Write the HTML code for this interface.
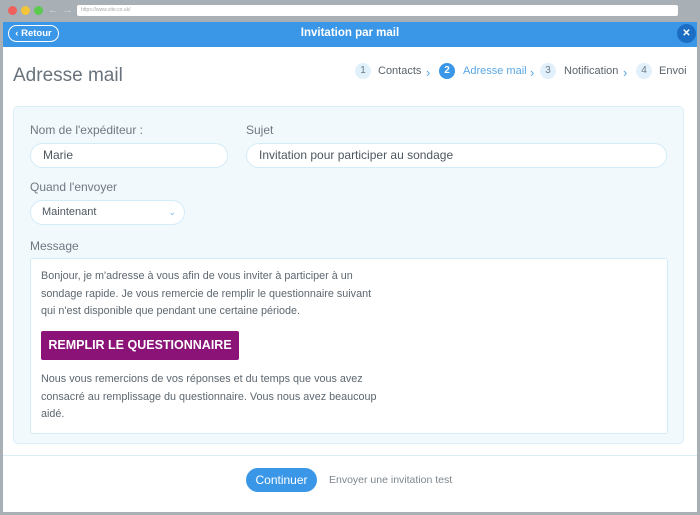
<!DOCTYPE html><html><head><meta charset="utf-8"><style>
*{margin:0;padding:0;box-sizing:border-box}
body{width:700px;height:515px;background:#a8afb5;font-family:"Liberation Sans",Arial,sans-serif;position:relative;overflow:hidden}
.a{position:absolute}
.dot{width:9px;height:9px;border-radius:50%;top:6px}
.win{left:3px;top:22px;width:694px;height:490px;background:#fff}
.hdr{left:3px;top:22px;width:694px;height:25px;background:#3a97e8}
.lbl{font-size:12px;color:#6f7880}
.inp{background:#fff;border:1px solid #d4ecf7;border-radius:13px;font-size:12px;color:#4d5760;padding-left:12px;line-height:23px}
.circ{width:16px;height:16px;border-radius:50%;background:#e0f1fb;color:#6d7780;font-size:10px;text-align:center;line-height:16px;top:63px}
.st{font-size:11px;color:#5a636b;top:65px}
.ch{font-size:13px;color:#5aa8e6;top:65px}
.msg{font-size:10.8px;color:#5d6770;line-height:17.5px;white-space:nowrap}
</style></head><body>
<div class="a dot" style="left:8px;background:#f0615d"></div>
<div class="a dot" style="left:21px;background:#f4c538"></div>
<div class="a dot" style="left:34px;background:#5cc94f"></div>
<div class="a" style="left:48px;top:4px;color:#d0d5d9;font-size:11px">&#8592; &#8594;</div>
<div class="a" style="left:77px;top:5px;width:601px;height:11px;background:#fff;border-radius:2px;font-size:5px;color:#aaa;padding-left:4px;line-height:11px">https://www.site.co.uk/</div>
<div class="a win"></div>
<div class="a hdr"></div>
<div class="a" style="left:8px;top:25px;width:51px;height:17px;border:1px solid #fff;border-radius:9px;color:#fff;font-size:9.5px;font-weight:bold;line-height:15px;text-align:center">&#8249; Retour</div>
<div class="a" style="left:0;width:700px;top:27px;text-align:center;color:#fff;font-size:11.5px;font-weight:bold">Invitation par mail</div>
<div class="a" style="left:677px;top:24px;width:19px;height:19px;border-radius:50%;background:#1c6ec4;color:#fff;font-size:10px;font-weight:bold;text-align:center;line-height:19px">✕</div>
<div class="a" style="left:13px;top:65px;font-size:19px;color:#69737c">Adresse mail</div>
<div class="a circ" style="left:355px">1</div><div class="a st" style="left:378px">Contacts</div><div class="a ch" style="left:426px">›</div>
<div class="a circ" style="left:439px;background:#3a97e8;color:#fff;font-weight:bold">2</div><div class="a st" style="left:463px;color:#5aa8e6">Adresse mail</div><div class="a ch" style="left:530px">›</div>
<div class="a circ" style="left:540px">3</div><div class="a st" style="left:564px">Notification</div><div class="a ch" style="left:623px">›</div>
<div class="a circ" style="left:636px">4</div><div class="a st" style="left:659px">Envoi</div>
<div class="a" style="left:13px;top:106px;width:671px;height:338px;background:#f1f9fd;border:1px solid #dbeff8;border-radius:5px"></div>
<div class="a lbl" style="left:30px;top:123px">Nom de l'expéditeur :</div>
<div class="a lbl" style="left:246px;top:123px">Sujet</div>
<div class="a inp" style="left:30px;top:143px;width:198px;height:25px">Marie</div>
<div class="a inp" style="left:246px;top:143px;width:421px;height:25px">Invitation pour participer au sondage</div>
<div class="a lbl" style="left:30px;top:180px">Quand l'envoyer</div>
<div class="a inp" style="left:30px;top:200px;width:155px;height:25px;font-size:11px;padding-left:11px">Maintenant<span style="position:absolute;right:8px;color:#7ab7e6;font-size:9px">&#8964;</span></div>
<div class="a lbl" style="left:30px;top:239px">Message</div>
<div class="a" style="left:30px;top:258px;width:638px;height:176px;background:#fff;border:1px solid #d4ecf7;border-radius:3px"></div>
<div class="a msg" style="left:41px;top:268px">Bonjour, je m'adresse à vous afin de vous inviter à participer à un<br>sondage rapide. Je vous remercie de remplir le questionnaire suivant<br>qui n'est disponible que pendant une certaine période.</div>
<div class="a" style="left:41px;top:331px;width:198px;height:29px;background:#8b1378;border-radius:2px;color:#fff;font-size:12.5px;font-weight:bold;text-align:center;line-height:29px">REMPLIR LE QUESTIONNAIRE</div>
<div class="a msg" style="left:41px;top:371px">Nous vous remercions de vos réponses et du temps que vous avez<br>consacré au remplissage du questionnaire. Vous nous avez beaucoup<br>aidé.</div>
<div class="a" style="left:3px;top:455px;width:694px;height:1px;background:#dbeef6"></div>
<div class="a" style="left:246px;top:468px;width:71px;height:24px;background:#3a97e8;border-radius:12px;color:#fff;font-size:12px;text-align:center;line-height:24px">Continuer</div>
<div class="a" style="left:329px;top:474px;font-size:10.5px;color:#7d868e">Envoyer une invitation test</div>
</body></html>
